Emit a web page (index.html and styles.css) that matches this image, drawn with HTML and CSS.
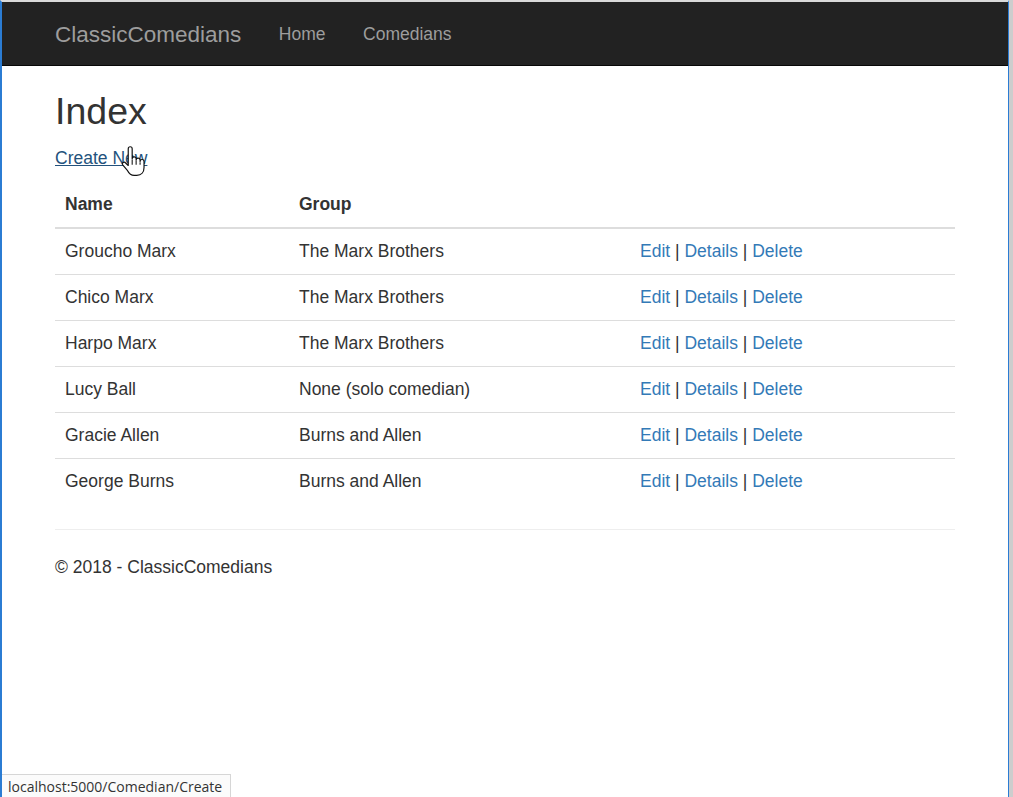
FILE: index.html
```html
<!DOCTYPE html>
<html>
<head>
<meta charset="utf-8">
<title>Index - ClassicComedians</title>
<link rel="stylesheet" href="styles.css">
</head>
<body>
<div class="window">
  <nav class="navbar">
    <div class="container nav-inner">
      <a class="brand" href="#">ClassicComedians</a>
      <ul class="nav">
        <li><a href="#">Home</a></li>
        <li><a href="#">Comedians</a></li>
      </ul>
    </div>
  </nav>
  <div class="container body-content">
    <h2 class="title">Index</h2>
    <p class="create">
      <a href="#">Create New</a>
      <svg class="cursor" width="25" height="31" viewBox="0 0 19 23">
        <path d="M5.5 1.8 a1.5 1.5 0 0 1 3 0 V9.5 a1.5 1.5 0 0 1 3 0 V10.5 a1.5 1.5 0 0 1 3 0 V11.5 a1.5 1.5 0 0 1 3 0 V16 c0 3.5 -2 6 -5.5 6 h-2 c-2.5 0 -4 -1.5 -5 -3.5 L1.3 14 a1.3 1.3 0 0 1 2.2 -1.4 L5.5 14.5 Z" fill="#fff" stroke="#111" stroke-width="0.9" stroke-linejoin="round"/>
        <path d="M8.5 10 V14 M11.5 11 V14 M14.5 12 V14" stroke="#111" stroke-width="0.8" fill="none"/>
      </svg>
    </p>
    <table class="table">
      <thead>
        <tr><th class="c-name">Name</th><th class="c-group">Group</th><th></th></tr>
      </thead>
      <tbody>
        <tr><td>Groucho Marx</td><td>The Marx Brothers</td><td><a href="#">Edit</a> | <a href="#">Details</a> | <a href="#">Delete</a></td></tr>
        <tr><td>Chico Marx</td><td>The Marx Brothers</td><td><a href="#">Edit</a> | <a href="#">Details</a> | <a href="#">Delete</a></td></tr>
        <tr><td>Harpo Marx</td><td>The Marx Brothers</td><td><a href="#">Edit</a> | <a href="#">Details</a> | <a href="#">Delete</a></td></tr>
        <tr><td>Lucy Ball</td><td>None (solo comedian)</td><td><a href="#">Edit</a> | <a href="#">Details</a> | <a href="#">Delete</a></td></tr>
        <tr><td>Gracie Allen</td><td>Burns and Allen</td><td><a href="#">Edit</a> | <a href="#">Details</a> | <a href="#">Delete</a></td></tr>
        <tr><td>George Burns</td><td>Burns and Allen</td><td><a href="#">Edit</a> | <a href="#">Details</a> | <a href="#">Delete</a></td></tr>
      </tbody>
    </table>
    <hr class="rule">
    <footer class="footer">
      <p>&copy; 2018 - ClassicComedians</p>
    </footer>
  </div>
  <div class="statusbar">localhost:5000/Comedian/Create</div>
</div>
</body>
</html>
```

FILE: styles.css
```css
html, body {
  margin: 0;
  padding: 0;
}
body {
  background: #cdcdcd;
  font-family: "Liberation Sans", Arial, Helvetica, sans-serif;
  font-size: 17.5px;
  line-height: 25px;
  color: #333;
  overflow: hidden;
}
.window {
  position: relative;
  width: 1006px;
  height: 795px;
  background: #fff;
  border-left: 2px solid #2b7cd3;
  border-right: 1px solid #2b7cd3;
  border-top: 2px solid #dadada;
  overflow: hidden;
}
a {
  color: #337ab7;
  text-decoration: none;
}
.container {
  width: 937.5px;
  margin: 0 auto;
  padding: 0 18.75px;
  box-sizing: border-box;
}
.navbar {
  background: #222;
  border-bottom: 1px solid #080808;
  height: 62.5px;
}
.nav-inner {
  display: flex;
  align-items: stretch;
  height: 62.5px;
}
.brand {
  color: #9d9d9d;
  font-size: 22.5px;
  line-height: 25px;
  padding: 19.5px 18.75px 18px;
  margin-left: -18.75px;
}
.nav {
  display: flex;
  list-style: none;
  margin: 0;
  padding: 0;
}
.nav a {
  display: block;
  color: #9d9d9d;
  padding: 19.5px 18.75px 18px;
  line-height: 25px;
}
.title {
  font-size: 37.5px;
  font-weight: 500;
  line-height: 1.1;
  margin: 25px 0 14.5px;
}
.create {
  position: relative;
  margin: 0 0 10.5px;
}
.create a {
  text-decoration: underline;
  color: #23527c;
}
.cursor {
  position: absolute;
  left: 66px;
  top: 0;
}
.table {
  width: 100%;
  border-collapse: collapse;
  border-spacing: 0;
  margin-bottom: 25px;
}
.table th, .table td {
  padding: 10px;
  text-align: left;
  vertical-align: top;
  line-height: 25px;
}
.table th {
  font-weight: bold;
  border-bottom: 2px solid #ddd;
}
.table td {
  border-top: 1px solid #ddd;
}
.c-name { width: 214px; }
.c-group { width: 321px; }
.rule {
  margin: 25px 0;
  border: 0;
  border-top: 1px solid #eee;
}
.footer p {
  margin: 0 0 12.5px;
}
.statusbar {
  position: absolute;
  left: 0;
  bottom: 0;
  width: 222px;
  height: 22px;
  padding: 0 0 0 6px;
  background: #fbfbfb;
  border-top: 1px solid #d6d6d6;
  border-right: 1px solid #d6d6d6;
  font-family: "Open Sans", "Noto Sans", sans-serif;
  font-size: 14px;
  line-height: 24px;
  color: #333;
  white-space: nowrap;
  overflow: hidden;
}
```
